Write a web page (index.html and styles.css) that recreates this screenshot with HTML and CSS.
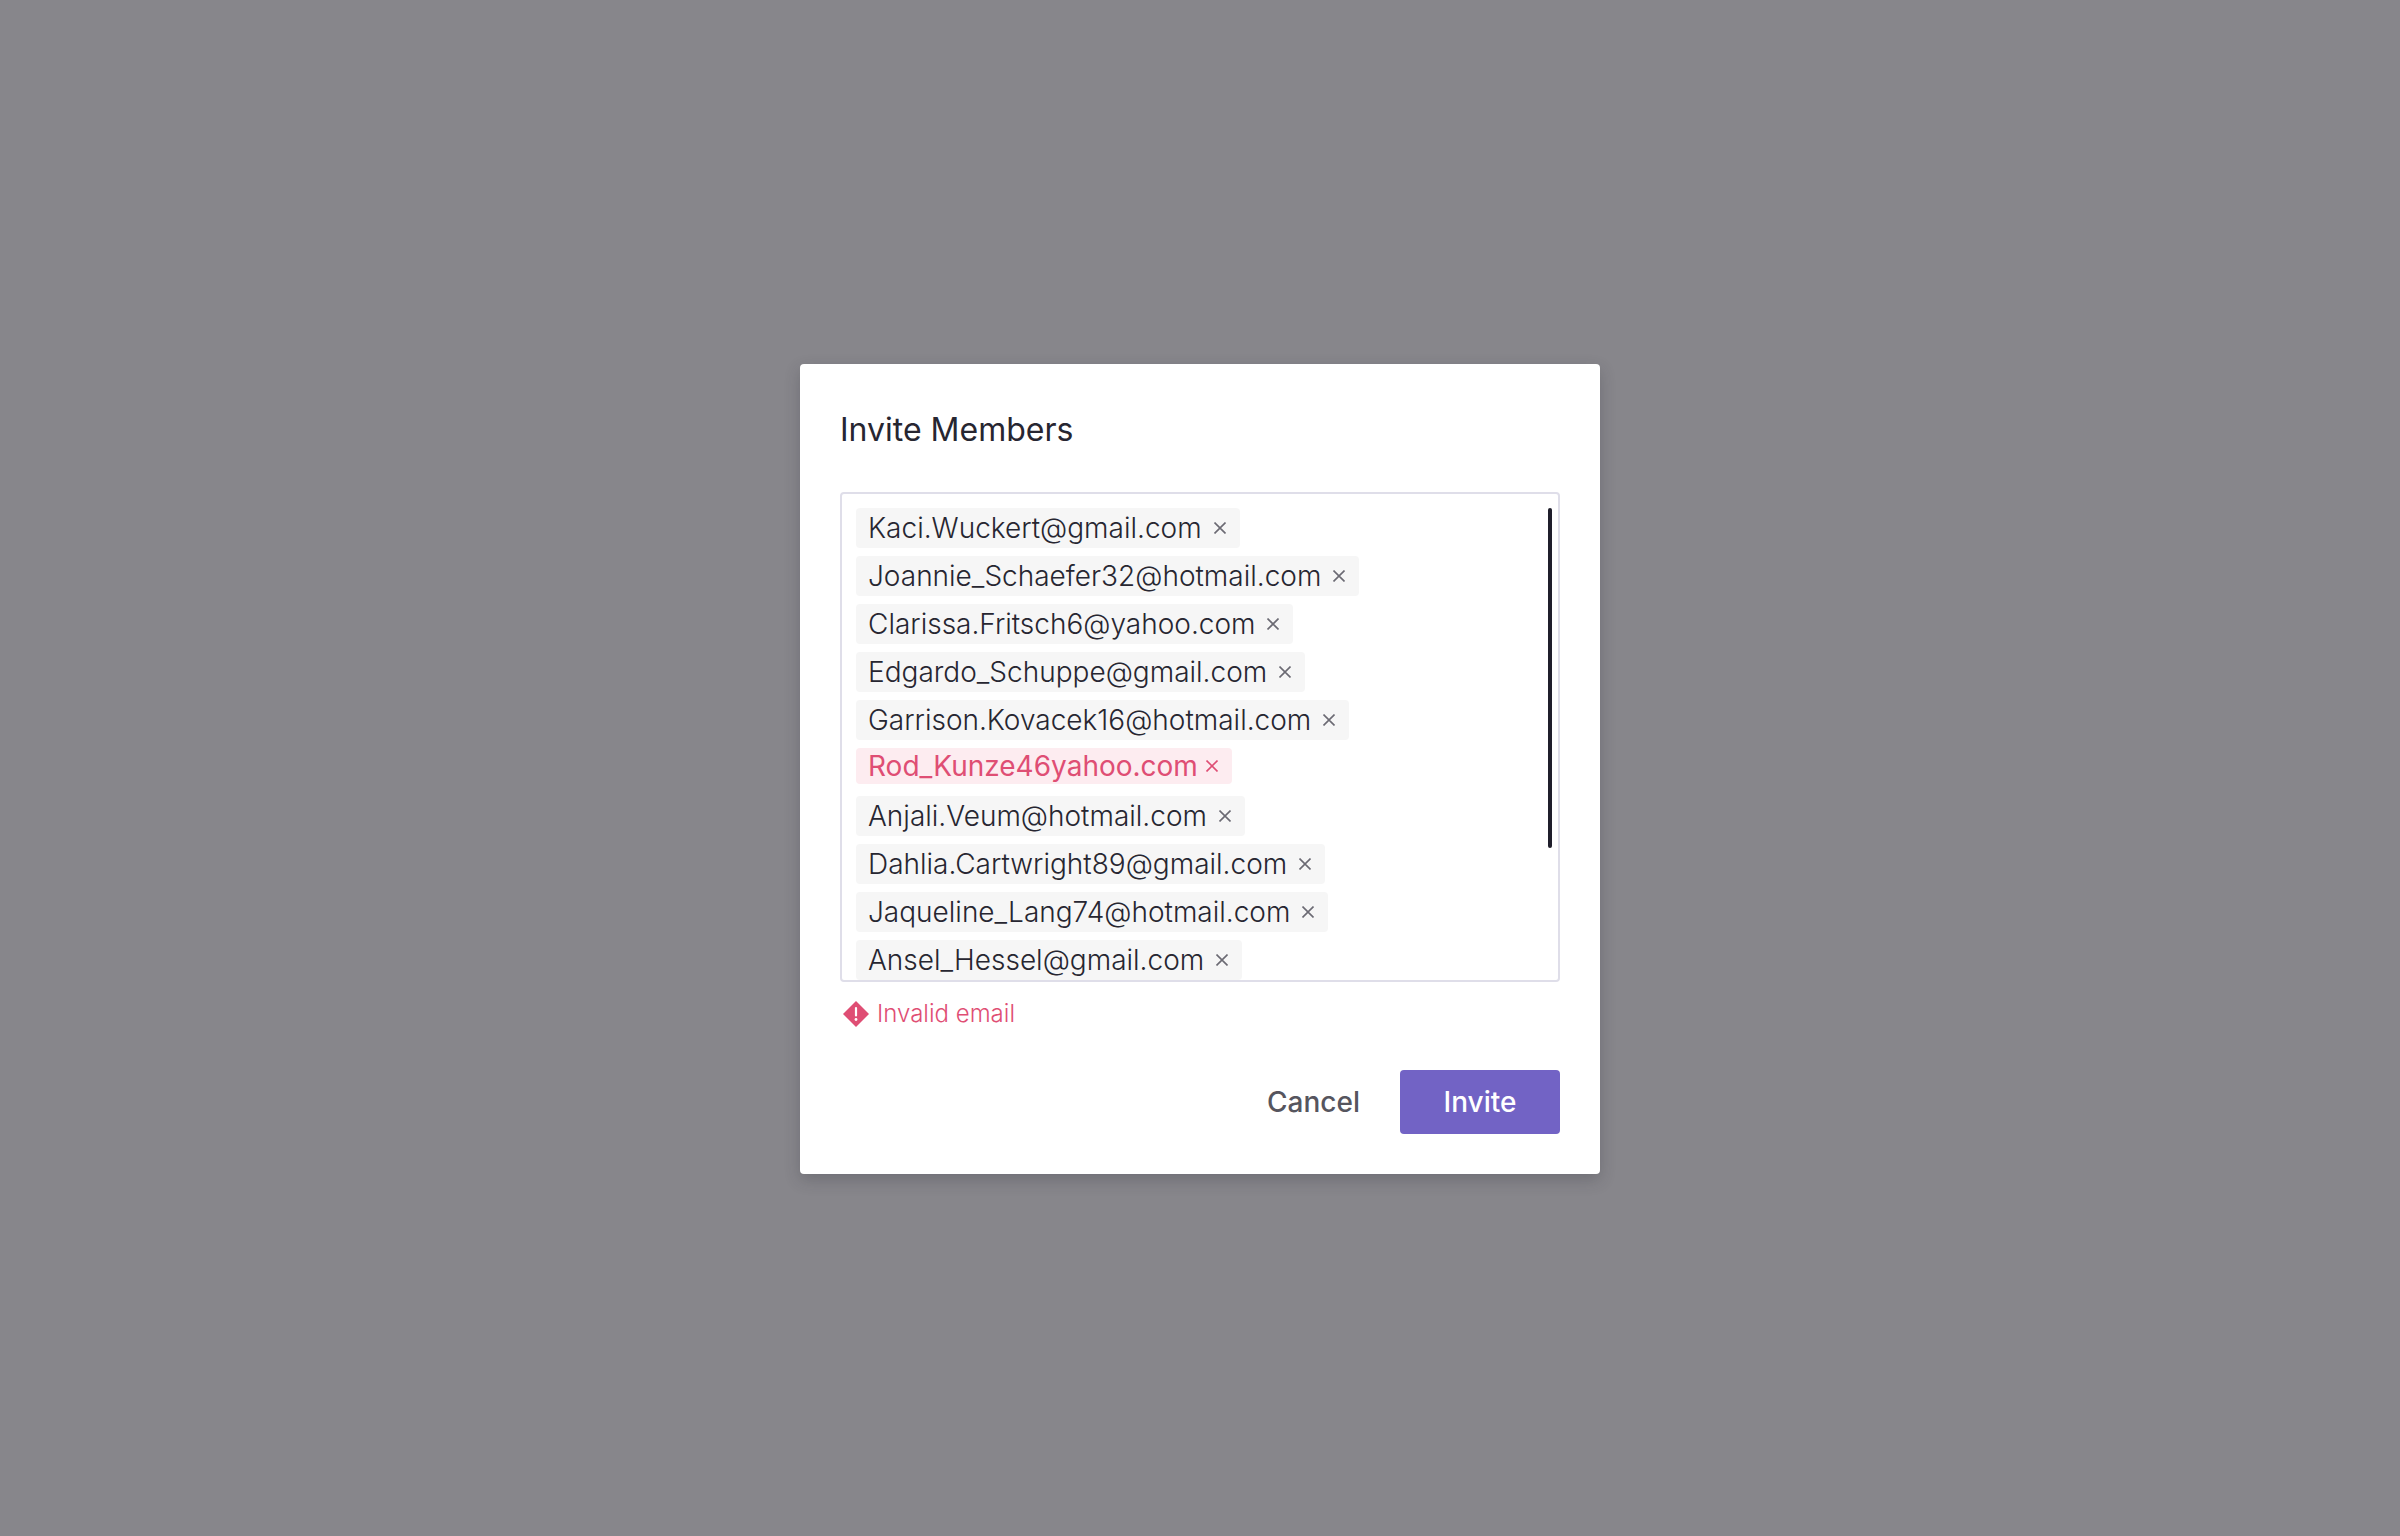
FILE: index.html
```html
<!DOCTYPE html>
<html lang="en">
<head>
<meta charset="utf-8">
<meta name="viewport" content="width=device-width, initial-scale=1">
<title>Invite Members</title>
<link rel="stylesheet" href="styles.css">
</head>
<body>
<svg class="sprite" aria-hidden="true">
  <symbol id="cross" viewBox="0 0 12 12"><path d="M.5.5l11 11M11.5.5l-11 11" fill="none" stroke="currentColor" stroke-width="1.6"/></symbol>
</svg>
<main class="overlay">
  <form class="modal" role="dialog" aria-labelledby="modal-title">
    <h1 class="modal-title" id="modal-title">Invite Members</h1>
    <div class="field">
      <ul class="chips">
        <li class="chip-row"><span class="chip">Kaci.Wuckert@gmail.com<button class="chip-remove" type="button" aria-label="Remove"><svg class="cross"><use href="#cross"/></svg></button></span></li>
        <li class="chip-row"><span class="chip">Joannie_Schaefer32@hotmail.com<button class="chip-remove" type="button" aria-label="Remove"><svg class="cross"><use href="#cross"/></svg></button></span></li>
        <li class="chip-row"><span class="chip">Clarissa.Fritsch6@yahoo.com<button class="chip-remove" type="button" aria-label="Remove"><svg class="cross"><use href="#cross"/></svg></button></span></li>
        <li class="chip-row"><span class="chip">Edgardo_Schuppe@gmail.com<button class="chip-remove" type="button" aria-label="Remove"><svg class="cross"><use href="#cross"/></svg></button></span></li>
        <li class="chip-row"><span class="chip">Garrison.Kovacek16@hotmail.com<button class="chip-remove" type="button" aria-label="Remove"><svg class="cross"><use href="#cross"/></svg></button></span></li>
        <li class="chip-row"><span class="chip chip-invalid">Rod_Kunze46yahoo.com<button class="chip-remove" type="button" aria-label="Remove"><svg class="cross"><use href="#cross"/></svg></button></span></li>
        <li class="chip-row"><span class="chip">Anjali.Veum@hotmail.com<button class="chip-remove" type="button" aria-label="Remove"><svg class="cross"><use href="#cross"/></svg></button></span></li>
        <li class="chip-row"><span class="chip">Dahlia.Cartwright89@gmail.com<button class="chip-remove" type="button" aria-label="Remove"><svg class="cross"><use href="#cross"/></svg></button></span></li>
        <li class="chip-row"><span class="chip">Jaqueline_Lang74@hotmail.com<button class="chip-remove" type="button" aria-label="Remove"><svg class="cross"><use href="#cross"/></svg></button></span></li>
        <li class="chip-row"><span class="chip">Ansel_Hessel@gmail.com<button class="chip-remove" type="button" aria-label="Remove"><svg class="cross"><use href="#cross"/></svg></button></span></li>
      </ul>
      <div class="scroll-thumb"></div>
    </div>
    <p class="error" role="alert">
      <svg class="error-icon" viewBox="0 0 26 26" aria-hidden="true"><path d="M13 0 26 13 13 26 0 13Z" fill="currentColor"/><path d="M13 7v7.500" stroke="#fff" stroke-width="2.200" stroke-linecap="round"/><circle cx="13" cy="18.500" r="1.400" fill="#fff"/></svg>
      Invalid email
    </p>
    <div class="actions">
      <button class="button" type="button">Cancel</button>
      <button class="button button-primary" type="submit">Invite</button>
    </div>
  </form>
</main>
</body>
</html>
```
FILE: styles.css
```css
* {
  box-sizing: border-box;
}

body {
  margin: 0;
  background: #87868b;
  color: #272631;
  font-family: Inter, "Liberation Sans", sans-serif;
  font-optical-sizing: none;
}

button {
  border: 0;
  background: none;
  font: inherit;
  color: inherit;
  cursor: pointer;
}

.sprite {
  display: none;
}

.overlay {
  min-height: 100vh;
  padding-top: 2px;
  display: grid;
  place-items: center;
}

.modal {
  width: min(800px, 100%);
  padding: 40px;
  border-radius: 4px;
  background: #fff;
  box-shadow: 0 6px 16px rgba(39, 38, 49, 0.24);
}

.modal-title {
  margin: 0 0 36px;
  font-size: 32px;
  line-height: 52px;
  font-weight: 400;
}

.field {
  display: flex;
  align-items: flex-start;
  justify-content: space-between;
  padding: 14px 6px 0 14px;
  border: 2px solid #dfdee9;
  border-radius: 4px;
}

.chips {
  display: grid;
  gap: 8px;
  margin: 0;
  padding: 0;
  list-style: none;
}

.chip-row {
  display: flex;
  align-items: flex-start;
  height: 40px;
}

.chip {
  display: flex;
  align-items: center;
  gap: 12px;
  padding: 0 14px 0 12px;
  border-radius: 4px;
  background: #f6f6f6;
  font-size: 28px;
  line-height: 40px;
  font-weight: 300;
}

.chip-remove {
  display: flex;
  padding: 0;
  color: #6b6a73;
}

.cross {
  width: 12px;
  height: 12px;
}

.chip-invalid {
  gap: 8px;
  background: #fdecf0;
  color: #df4e74;
  font-weight: 400;
  line-height: 36px;
}

.chip-invalid .chip-remove {
  color: inherit;
}

.scroll-thumb {
  width: 4px;
  height: 340px;
  border-radius: 2px;
  background: #1f1e2b;
}

.error {
  display: flex;
  align-items: center;
  gap: 8px;
  margin: 16px 0 40px;
  padding-left: 3px;
  color: #df4e74;
  font-size: 24px;
  line-height: 32px;
  font-weight: 300;
}

.error-icon {
  width: 26px;
  height: 26px;
}

.actions {
  display: flex;
  justify-content: flex-end;
}

.button {
  min-width: 160px;
  height: 64px;
  padding: 0 40px;
  border-radius: 4px;
  color: #56555e;
  font-size: 28px;
  font-weight: 500;
}

.button-primary {
  background: #7263c5;
  color: #fff;
}
```
